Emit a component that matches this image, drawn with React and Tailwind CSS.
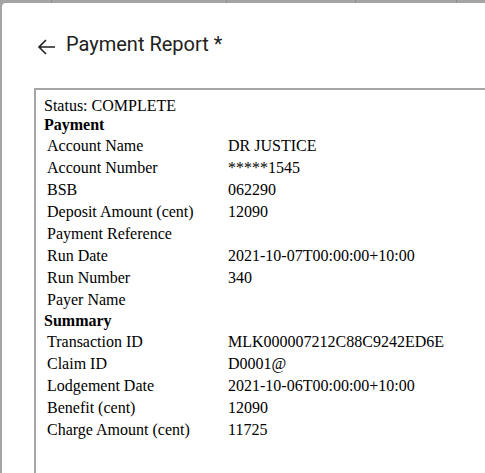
const payment = [
  ["Account Name", "DR JUSTICE"],
  ["Account Number", "*****1545"],
  ["BSB", "062290"],
  ["Deposit Amount (cent)", "12090"],
  ["Payment Reference", ""],
  ["Run Date", "2021-10-07T00:00:00+10:00"],
  ["Run Number", "340"],
  ["Payer Name", ""],
];

const summary = [
  ["Transaction ID", "MLK000007212C88C9242ED6E"],
  ["Claim ID", "D0001@"],
  ["Lodgement Date", "2021-10-06T00:00:00+10:00"],
  ["Benefit (cent)", "12090"],
  ["Charge Amount (cent)", "11725"],
];

const Rows = ({ rows }) => (
  <div className="flex flex-col gap-[4px] py-[3px] pl-[3px]">
    {rows.map(([label, value]) => (
      <div className="grid grid-cols-[181px_1fr] h-[18px] leading-[18px]" key={label}>
        <span>{label}</span>
        <span>{value}</span>
      </div>
    ))}
  </div>
);

const App = () => {
  return (
    <div className="w-[485px] h-[473px] overflow-hidden flex flex-col bg-[#a4a4a4]">
      <div className="flex h-[3px] shrink-0">
        <div className="w-[52px] border-r border-[#8c8c8c]" />
        <div className="w-[175px] border-r border-[#8c8c8c]" />
        <div className="w-[129px] border-r border-[#8c8c8c]" />
        <div className="w-[101px] border-r border-[#8c8c8c]" />
      </div>
      <div className="flex-1 ml-[2px] w-[520px] bg-white rounded-tl-[4px] overflow-hidden pl-[32px]">
        <div className="flex items-center h-[32px] mt-[25px] gap-[7px]">
          <svg
            width="24"
            height="24"
            viewBox="0 0 24 24"
            fill="none"
            stroke="#212121"
            strokeWidth="1.6"
            className="ml-[1px] mt-[6px]"
          >
            <path d="M20 12H4.5M11 5l-7 7 7 7" />
          </svg>
          <p className="font-['Roboto',sans-serif] text-[20px] text-[#212121]">Payment Report *</p>
        </div>
        <div className="mt-[28px] w-[480px] h-[400px] border-2 border-[#a5a5a5] pl-[8px] pt-[7px] font-['Liberation_Serif',serif] text-[16px] text-black">
          <p className="leading-[18px]">Status: COMPLETE</p>
          <p className="leading-[18px] font-bold mt-[1px]">Payment</p>
          <Rows rows={payment} />
          <p className="leading-[18px] font-bold">Summary</p>
          <Rows rows={summary} />
        </div>
      </div>
    </div>
  );
};

export default App;
